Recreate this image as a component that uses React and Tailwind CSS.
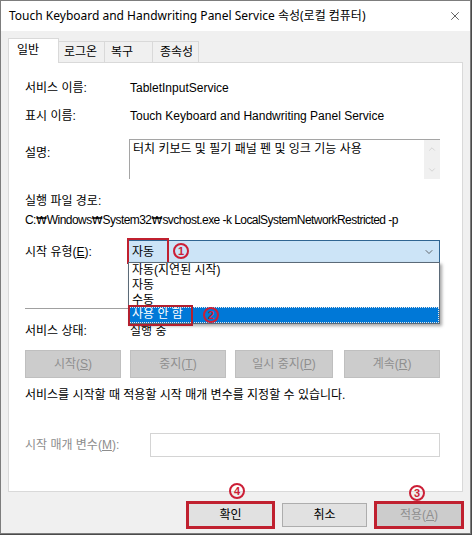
import { ChevronDown, ChevronUp, X } from "lucide-react";

const font = "font-['Liberation_Sans','Noto_Sans_CJK_KR',sans-serif]";

function Circled({ n, className = "" }) {
  return (
    <span
      className={`absolute flex h-[16px] w-[16px] items-center justify-center rounded-full border-[2px] border-[#cc1f36] text-[11px] font-bold leading-none text-[#cc1f36] ${className}`}
    >
      {n}
    </span>
  );
}

function DisabledButton({ children, className = "" }) {
  return (
    <div
      className={`flex h-[28px] items-center justify-center border border-[#bfbfbf] bg-[#cccccc] text-[12px] text-[#8f8f8f] ${className}`}
    >
      {children}
    </div>
  );
}

function Row({ label, labelWidth = "w-[105px]", children, className = "" }) {
  return (
    <div className={`flex items-center ${className}`}>
      <div className={`${labelWidth} shrink-0`}>{label}</div>
      {children}
    </div>
  );
}

function Won() {
  return <span className="font-['DejaVu_Sans',sans-serif] text-[11px] tracking-[0px]">₩</span>;
}

export default function App() {
  return (
    <div className={`h-[535px] w-[472px] overflow-hidden bg-[#4b4b4b] ${font} text-[12px] leading-[16px] text-black`}>
      <div className="flex h-[534px] w-[471px] flex-col border border-[#7d7d7d] bg-[#f0f0f0]">
        {/* title bar */}
        <div className="flex h-[30px] shrink-0 items-center justify-between bg-white pl-[8px] pr-[8px]">
          <span className="font-['Noto_Sans','Noto_Sans_CJK_KR',sans-serif] text-[12px]">
            Touch Keyboard and Handwriting Panel Service 속성(로컬 컴퓨터)
          </span>
          <X size={14} strokeWidth={1.2} className="text-[#222]" />
        </div>

        <div className="flex flex-1 flex-col px-[7px] pt-[7px]">
          {/* tabs */}
          <div className="flex h-[24px] items-end">
            <div className="relative z-10 mb-[-1px] flex h-[25px] w-[51px] items-start border border-b-0 border-[#d9d9d9] bg-white pl-[8px] pt-[3px]">
              일반
            </div>
            <div className="flex h-[21px] w-[46px] items-center border-r border-t border-[#d9d9d9] pl-[5px]">로그온</div>
            <div className="flex h-[21px] w-[48px] items-center border-r border-t border-[#d9d9d9] pl-[6px]">복구</div>
            <div className="flex h-[21px] w-[46px] items-center border-r border-t border-[#d9d9d9] pl-[7px]">종속성</div>
          </div>

          {/* panel */}
          <div className="flex h-[430px] w-[455px] flex-col border border-[#d9d9d9] bg-white pl-[16px]">
            <Row label="서비스 이름:" className="mt-[17px] h-[16px]">
              <span>TabletInputService</span>
            </Row>
            <Row label="표시 이름:" className="mt-[12px] h-[16px]">
              <span>Touch Keyboard and Handwriting Panel Service</span>
            </Row>
            <div className="mt-[15px] flex h-[40px]">
              <div className="w-[104px] shrink-0 pt-[6px]">설명:</div>
              <div className="flex w-[311px] border-l border-t border-[#a5a5a5]">
                <div className="flex-1 pl-[3px] pt-[1px]">터치 키보드 및 필기 패널 펜 및 잉크 기능 사용</div>
                <div className="flex w-[16px] flex-col items-center justify-between bg-[#f0f0f0] py-[4px] text-[#c2c2c2]">
                  <ChevronUp size={10} strokeWidth={1.5} />
                  <ChevronDown size={10} strokeWidth={1.5} />
                </div>
              </div>
            </div>
            <div className="mt-[14px] h-[16px]">실행 파일 경로:</div>
            <div className="mt-[3px] h-[16px] whitespace-nowrap tracking-[-0.55px]">
              C:<Won />Windows<Won />System32<Won />svchost.exe -k LocalSystemNetworkRestricted -p
            </div>

            <div className="mt-[12px] flex h-[23px] items-center">
              <div className="w-[102px] shrink-0">
                시작 유형(<u>E</u>):
              </div>
              <div className="relative h-[23px] w-[313px]">
                <div className="flex h-full items-center justify-between border border-[#2f6592] bg-[#cce4f7] pl-[4px] pr-[4px]">
                  <span>자동</span>
                  <ChevronDown size={12} strokeWidth={1.4} className="text-[#333]" />
                </div>
                {/* annotation 1 */}
                <div className="absolute left-[0px] top-[-2px] h-[26px] w-[42px] border-[2px] border-[#c0202f]" />
                <Circled n="1" className="left-[46px] top-[3px]" />

                {/* dropdown list */}
                <div className="absolute left-[1px] top-[22px] z-20 w-[312px] border border-[#5b6a78] bg-white shadow-[2px_2px_3px_rgba(0,0,0,0.35)]">
                  <div className="h-[15px] pl-[3px] leading-[15px]">자동(지연된 시작)</div>
                  <div className="h-[15px] pl-[3px] leading-[15px]">자동</div>
                  <div className="h-[14px] overflow-hidden pl-[3px] leading-[15px]">수동</div>
                  <div className="h-[16px] bg-[#0078d7] pl-[3px] leading-[15px] text-white outline-1 outline-offset-[-1px] outline-dotted outline-[#e8e8e8]">
                    사용 안 함
                  </div>
                  {/* annotation 2 */}
                  <div className="absolute bottom-[-3px] left-[-1px] h-[21px] w-[65px] border-[2px] border-[#b3202f]" />
                  <Circled n="2" className="bottom-[0px] left-[74px] border-[#a5304b] text-[#a5304b]" />
                </div>
              </div>
            </div>

            <div className="mt-[45px] h-px w-[415px] bg-[#a0a0a0]" />

            <Row label="서비스 상태:" className="mt-[14px] h-[16px]">
              <span>실행 중</span>
            </Row>

            <div className="mt-[11px] flex h-[28px]">
              <DisabledButton className="w-[96px]">
                시작(<u>S</u>)
              </DisabledButton>
              <DisabledButton className="ml-[9px] w-[96px]">
                중지(<u>T</u>)
              </DisabledButton>
              <DisabledButton className="ml-[9px] w-[98px]">
                일시 중지(<u>P</u>)
              </DisabledButton>
              <DisabledButton className="ml-[11px] w-[96px]">
                계속(<u>R</u>)
              </DisabledButton>
            </div>

            <div className="mt-[9px] h-[16px]">서비스를 시작할 때 적용할 시작 매개 변수를 지정할 수 있습니다.</div>

            <div className="mt-[30px] flex h-[24px] items-center">
              <div className="w-[125px] shrink-0 text-[#8d8d8d]">
                시작 매개 변수(<u>M</u>):
              </div>
              <div className="h-[24px] w-[290px] border border-[#d4d4d4] bg-white" />
            </div>
          </div>

          {/* bottom buttons */}
          <div className="mt-[11px] flex h-[24px] justify-end pr-[0px]">
            <div className="relative h-[24px] w-[85px]">
              <div className="flex h-full items-center justify-center border border-[#adadad] bg-[#e1e1e1]">확인</div>
              <div className="absolute inset-[-2px] border-[3px] border-[#c0202f]" />
              <Circled n="4" className="left-[41px] top-[-20px]" />
            </div>
            <div className="ml-[9px] flex h-[24px] w-[85px] items-center justify-center border border-[#adadad] bg-[#e1e1e1]">
              취소
            </div>
            <div className="relative ml-[9px] mr-[1px] h-[24px] w-[86px]">
              <div className="flex h-full items-center justify-center border border-[#bfbfbf] bg-[#cccccc] text-[#8f8f8f]">
                적용(<u>A</u>)
              </div>
              <div className="absolute inset-[-2px] border-[3px] border-[#c0202f]" />
              <Circled n="3" className="left-[33px] top-[-18px]" />
            </div>
          </div>
        </div>
      </div>
    </div>
  );
}
